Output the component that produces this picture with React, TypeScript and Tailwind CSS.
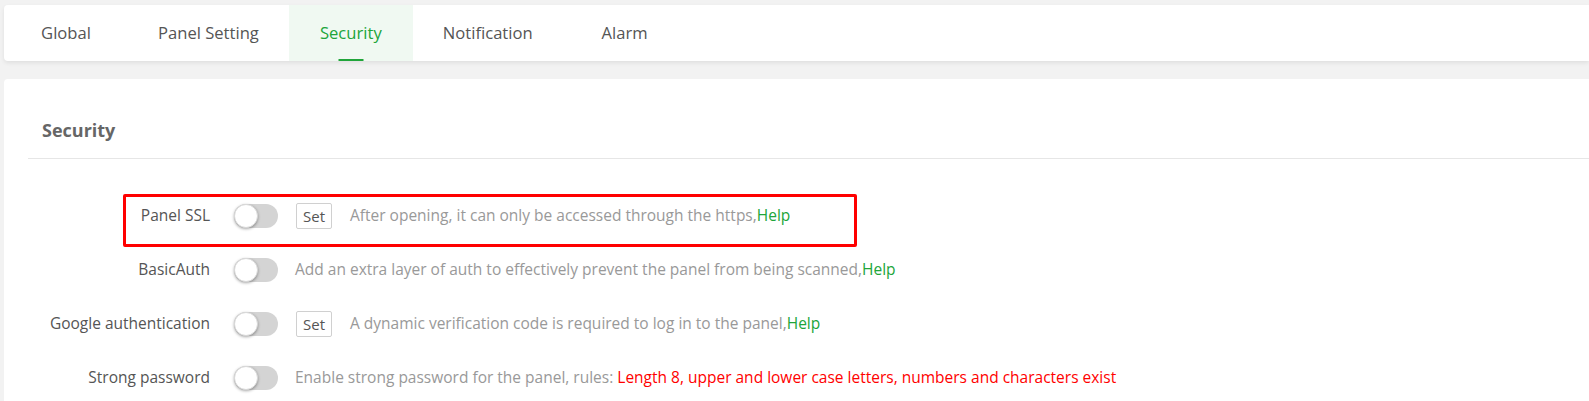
import React from "react";

const tabs = ["Global", "Panel Setting", "Security", "Notification", "Alarm"];

type Row = {
  label: string;
  set?: boolean;
  desc: string;
  help?: boolean;
  warn?: string;
};

const rows: Row[] = [
  { label: "Panel SSL", set: true, desc: "After opening, it can only be accessed through the https,", help: true },
  { label: "BasicAuth", desc: "Add an extra layer of auth to effectively prevent the panel from being scanned,", help: true },
  { label: "Google authentication", set: true, desc: "A dynamic verification code is required to log in to the panel,", help: true },
  {
    label: "Strong password",
    desc: "Enable strong password for the panel, rules: ",
    warn: "Length 8, upper and lower case letters, numbers and characters exist",
  },
];

function Toggle() {
  return (
    <div className="w-[44px] h-[24px] rounded-full bg-[#d4d4d4] relative shrink-0">
      <div className="absolute left-0 top-0 w-[24px] h-[24px] rounded-full bg-white border border-[#d9d9d9] shadow-[0_1px_3px_rgba(0,0,0,0.35)]"></div>
    </div>
  );
}

export default function App() {
  return (
    <div className="min-h-screen bg-[#f2f2f2] pl-[4px] pt-[5px] overflow-hidden font-['Open_Sans',sans-serif]">
      {/* Tabs */}
      <div className="h-[56px] bg-white rounded-l-[4px] shadow-[0_2px_4px_rgba(0,0,0,0.08)] flex">
        {tabs.map((t) => {
          const active = t === "Security";
          return (
            <div
              key={t}
              className={`relative min-w-[124px] px-[30px] flex items-center justify-center text-[16.6px] ${
                active ? "bg-[#f0f9f2] text-[#20a53a]" : "text-[#555]"
              }`}
            >
              {t}
              {active && <span className="absolute bottom-0 left-1/2 -translate-x-1/2 w-[25px] h-[2px] bg-[#20a53a]"></span>}
            </div>
          );
        })}
      </div>

      {/* Card */}
      <div className="mt-[18px] bg-white rounded-l-[4px] pt-[24px] pl-[24px] h-[400px]">
        <div className="h-[56px] flex items-center pl-[14px] border-b border-[#e6e6e6] text-[18px] font-bold text-[#666]">
          Security
        </div>

        <div className="relative pt-[30px]">
          {/* highlight box */}
          <div className="absolute left-[95px] top-[35px] w-[734px] h-[53px] border-[3.5px] border-[#ff0000] rounded-[2px]"></div>

          {rows.map((r) => (
            <div key={r.label} className="h-[54px] flex items-center">
              <div className="w-[182px] text-right text-[15.5px] text-[#555] shrink-0">{r.label}</div>
              <div className="ml-[24px]">
                <Toggle />
              </div>
              {r.set && (
                <div className="ml-[18px] w-[36px] h-[26px] border border-[#d0d0d0] rounded-[2px] flex items-center justify-center text-[15px] text-[#555]">
                  Set
                </div>
              )}
              <div className={`${r.set ? "ml-[18px]" : "ml-[17px]"} text-[15.5px] text-[#999] whitespace-nowrap`}>
                {r.desc}
                {r.help && <span className="text-[#20a53a]">Help</span>}
                {r.warn && <span className="text-[#ff0000]">{r.warn}</span>}
              </div>
            </div>
          ))}
        </div>
      </div>
    </div>
  );
}
